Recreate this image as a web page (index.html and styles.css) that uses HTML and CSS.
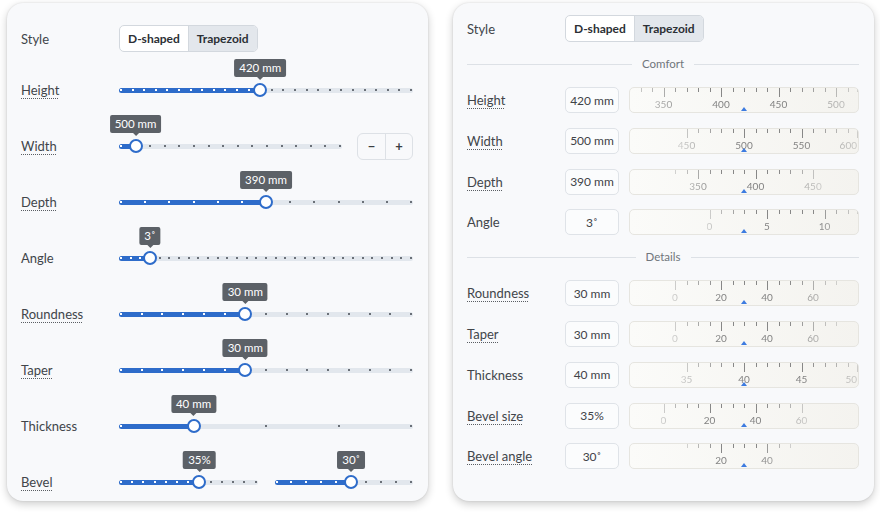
FILE: index.html
```html
<!DOCTYPE html>
<html lang="en">
<head>
    <meta charset="UTF-8">
    <meta name="viewport" content="width=device-width, initial-scale=1.0">
    <title>Handle settings</title>
    <link rel="stylesheet" href="styles.css">
</head>
<body>

    <!-- Slider panel -->
    <div class="panel panel-sliders">
        <div class="row row-style">
            <div class="label">Style</div>
            <div class="segmented">
                <button class="seg">D-shaped</button>
                <button class="seg active">Trapezoid</button>
            </div>
        </div>

        <div class="slider-list">
            <div class="row">
                <div class="label"><span class="hint">Height</span></div>
                <div class="slider" data-steps="25" data-at="12" data-tip="420 mm"></div>
            </div>
            <div class="row">
                <div class="label"><span class="hint">Width</span></div>
                <div class="slider" data-steps="15" data-at="1" data-tip="500 mm"></div>
                <div class="stepper">
                    <button>&minus;</button>
                    <button>+</button>
                </div>
            </div>
            <div class="row">
                <div class="label"><span class="hint">Depth</span></div>
                <div class="slider" data-steps="12" data-at="6" data-tip="390 mm"></div>
            </div>
            <div class="row">
                <div class="label">Angle</div>
                <div class="slider" data-steps="30" data-at="3" data-tip="3&#730;"></div>
            </div>
            <div class="row">
                <div class="label"><span class="hint">Roundness</span></div>
                <div class="slider" data-steps="14" data-at="6" data-tip="30 mm"></div>
            </div>
            <div class="row">
                <div class="label"><span class="hint">Taper</span></div>
                <div class="slider" data-steps="14" data-at="6" data-tip="30 mm"></div>
            </div>
            <div class="row">
                <div class="label">Thickness</div>
                <div class="slider" data-steps="4" data-at="1" data-tip="40 mm"></div>
            </div>
            <div class="row">
                <div class="label"><span class="hint">Bevel</span></div>
                <div class="slider-pair">
                    <div class="slider" data-steps="12" data-at="7" data-tip="35%"></div>
                    <div class="slider" data-steps="9" data-at="5" data-tip="30&#730;"></div>
                </div>
            </div>
        </div>
    </div>

    <!-- Ruler panel -->
    <div class="panel panel-rulers">
        <div class="row row-style">
            <div class="label">Style</div>
            <div class="segmented">
                <button class="seg">D-shaped</button>
                <button class="seg active">Trapezoid</button>
            </div>
        </div>

        <div class="divider">Comfort</div>
        <div class="field-list">
            <div class="field">
                <div class="label"><span class="hint">Height</span></div>
                <div class="value">420 mm</div>
                <div class="ruler" data-value="420" data-min="300" data-max="600" data-step="10" data-major="50"></div>
            </div>
            <div class="field">
                <div class="label"><span class="hint">Width</span></div>
                <div class="value">500 mm</div>
                <div class="ruler" data-value="500" data-min="450" data-max="700" data-step="10" data-major="50"></div>
            </div>
            <div class="field">
                <div class="label"><span class="hint">Depth</span></div>
                <div class="value">390 mm</div>
                <div class="ruler" data-value="390" data-min="330" data-max="450" data-step="10" data-major="50"></div>
            </div>
            <div class="field">
                <div class="label">Angle</div>
                <div class="value">3&#730;</div>
                <div class="ruler" data-value="3" data-min="0" data-max="15" data-step="1" data-major="5"></div>
            </div>
        </div>

        <div class="divider">Details</div>
        <div class="field-list">
            <div class="field">
                <div class="label"><span class="hint">Roundness</span></div>
                <div class="value">30 mm</div>
                <div class="ruler" data-value="30" data-min="0" data-max="70" data-step="5" data-major="20"></div>
            </div>
            <div class="field">
                <div class="label"><span class="hint">Taper</span></div>
                <div class="value">30 mm</div>
                <div class="ruler" data-value="30" data-min="0" data-max="70" data-step="5" data-major="20"></div>
            </div>
            <div class="field">
                <div class="label">Thickness</div>
                <div class="value">40 mm</div>
                <div class="ruler" data-value="40" data-min="35" data-max="55" data-step="1" data-major="5"></div>
            </div>
            <div class="field">
                <div class="label"><span class="hint">Bevel size</span></div>
                <div class="value">35%</div>
                <div class="ruler" data-value="35" data-min="0" data-max="60" data-step="5" data-major="20"></div>
            </div>
            <div class="field">
                <div class="label"><span class="hint">Bevel angle</span></div>
                <div class="value">30&#730;</div>
                <div class="ruler" data-value="30" data-min="5" data-max="50" data-step="5" data-major="20"></div>
            </div>
        </div>
    </div>

    <script>
        // stepped sliders: track, fill, step dots, thumb and value tip
        function buildSlider(el) {
            var steps = +el.dataset.steps;
            var at = +el.dataset.at;
            var pos = function (i) { return 'calc(2px + (100% - 4px) * ' + (i / steps) + ')'; };
            var html = '<div class="fill" style="width: ' + pos(at) + '"></div>';
            for (var i = 0; i <= steps; i++) {
                html += '<span class="dot' + (i < at ? ' on' : '') + '" style="left: ' + pos(i) + '"></span>';
            }
            html += '<span class="thumb" style="left: ' + pos(at) + '"></span>';
            html += '<span class="tip" style="left: ' + pos(at) + '">' + el.dataset.tip + '</span>';
            el.innerHTML = html;
        }

        function buildRuler(el) {
            var w = el.clientWidth;
            var h = el.clientHeight;
            var value = +el.dataset.value;
            var min = +el.dataset.min;
            var max = +el.dataset.max;
            var step = +el.dataset.step;
            var major = +el.dataset.major;
            var gap = 11.5;
            var mid = w / 2;
            var ticks = '';
            var labels = '';

            for (var i = 0; min + i * step <= max; i++) {
                var v = min + i * step;
                var x = mid + (v - value) * gap / step;
                if (x < -1 || x > w + 2) continue;
                var big = v % major === 0;
                var px = Math.min(Math.round(x), w - 1) + 0.5;
                ticks += '<line x1="' + px + '" y1="0" x2="' + px + '" y2="' + (big ? 9 : 4) + '"/>';
                if (big) {
                    if (x > w - 9) {
                        labels += '<text x="' + (w - 1) + '" y="20" text-anchor="end">' + v + '</text>';
                    } else {
                        labels += '<text x="' + x + '" y="20">' + v + '</text>';
                    }
                }
            }

            el.innerHTML =
                '<svg width="' + w + '" height="' + h + '" viewBox="0 0 ' + w + ' ' + h + '">' +
                '<g class="scale">' + '<g class="ticks">' + ticks + '</g>' +
                '<g class="nums">' + labels + '</g></g>' +
                '<polygon class="marker" points="' + (mid - 3) + ',' + (h - 1) + ' ' + (mid + 3) + ',' + (h - 1) + ' ' + mid + ',' + (h - 5) + '"/>' +
                '</svg>';
        }

        document.querySelectorAll('.slider').forEach(buildSlider);
        document.querySelectorAll('.ruler').forEach(buildRuler);
    </script>
</body>
</html>
```

FILE: styles.css
```css
/* General */
* {
    box-sizing: border-box;
}

body {
    margin: 0;
    padding: 3px 6px 0 7px;
    height: 512px;
    background: #fff;
    font-family: 'Lato', 'Liberation Sans', sans-serif;
    color: #3f4348;
    display: flex;
    gap: 25px;
}

button {
    font-family: inherit;
    cursor: pointer;
}

/* Panels */
.panel {
    width: 421px;
    height: 498px;
    flex-shrink: 0;
    background: #f8f9fb;
    border-radius: 16px;
    box-shadow: 0 3px 8px rgba(0, 0, 0, 0.2), 0 0 2px rgba(0, 0, 0, 0.12);
    padding: 22px 15px 0 14px;
}

.panel-rulers {
    padding-top: 12px;
}

.row {
    display: flex;
    align-items: center;
    height: 28px;
}

.row-style {
    height: 27px;
}

.label {
    width: 98px;
    flex-shrink: 0;
    font-size: 13px;
    color: #41454a;
}

.hint {
    text-decoration: underline dotted #5a5e63;
    text-decoration-thickness: 1px;
    text-underline-offset: 3px;
}

/* Segmented switch */
.segmented {
    display: flex;
    height: 27px;
    border: 1px solid #d3d8de;
    border-radius: 5px;
    overflow: hidden;
    background: #fff;
}

.seg {
    border: none;
    background: transparent;
    padding: 0 8px;
    font-size: 12px;
    font-weight: bold;
    color: #2c3035;
}

.seg.active {
    background: #e3e7ec;
    border-left: 1px solid #d3d8de;
}

/* Sliders */
.slider-list {
    margin-top: 24px;
    display: flex;
    flex-direction: column;
    gap: 28px;
}

.slider {
    position: relative;
    flex: 1;
    height: 5px;
    border-radius: 3px;
    background: #e2e7ed;
}

.slider .fill {
    position: absolute;
    left: 0;
    top: 0;
    bottom: 0;
    border-radius: 3px;
    background: #2e6cca;
}

.slider .dot {
    position: absolute;
    top: 1.5px;
    width: 2px;
    height: 2px;
    margin-left: -1px;
    background: #6a7078;
}

.slider .dot.on {
    background: #fff;
}

.slider .thumb {
    position: absolute;
    top: 50%;
    width: 14px;
    height: 14px;
    margin: -7px 0 0 -7px;
    border: 2px solid #2e6cca;
    border-radius: 50%;
    background: #fff;
}

.slider .tip {
    position: absolute;
    bottom: 16px;
    transform: translateX(-50%);
    padding: 0 5px;
    border-radius: 2px;
    background: #5c6167;
    color: #fff;
    font-size: 11.5px;
    line-height: 18px;
    white-space: nowrap;
}

.slider .tip::after {
    content: '';
    position: absolute;
    left: 50%;
    top: 100%;
    margin-left: -3px;
    border: 3px solid transparent;
    border-top-color: #5c6167;
    border-bottom: 0;
}

.slider-pair {
    flex: 1;
    display: flex;
    gap: 17px;
}

.stepper {
    display: flex;
    margin-left: 15px;
    height: 27px;
    border: 1px solid #dde1e6;
    border-radius: 6px;
    overflow: hidden;
}

.stepper button {
    width: 27px;
    border: none;
    background: transparent;
    font-size: 13px;
    font-weight: bold;
    color: #3a3e43;
}

.stepper button + button {
    border-left: 1px solid #dde1e6;
}

/* Ruler inputs */
.divider {
    display: flex;
    align-items: center;
    gap: 10px;
    margin: 14px 0 15px;
    font-size: 11.5px;
    line-height: 16px;
    color: #70767c;
}

.divider::before, .divider::after {
    content: '';
    flex: 1;
    height: 1px;
    background: #dde1e6;
}

.field-list {
    display: flex;
    flex-direction: column;
    gap: 14.75px;
}

.field {
    display: flex;
    align-items: center;
    height: 26px;
}

.value {
    width: 54px;
    height: 26px;
    margin-right: 10px;
    display: flex;
    align-items: center;
    justify-content: center;
    border: 1px solid #dfe3e8;
    border-radius: 5px;
    background: #fbfcfd;
    font-size: 12px;
    color: #3f4348;
}

.ruler {
    flex: 1;
    height: 26px;
    border: 1px solid #e6e5e0;
    border-radius: 5px;
    overflow: hidden;
    background: linear-gradient(to right, #fbfbf9, #f4f3ef);
}

.ruler svg {
    display: block;
}

.ruler .scale {
    -webkit-mask-image: linear-gradient(to right, rgba(0, 0, 0, 0.35), #000 30%, #000 70%, rgba(0, 0, 0, 0.35));
    mask-image: linear-gradient(to right, rgba(0, 0, 0, 0.35), #000 30%, #000 70%, rgba(0, 0, 0, 0.35));
}

.ruler line {
    stroke: #878787;
    stroke-width: 1;
}

.ruler text {
    font-family: 'Lato', sans-serif;
    font-size: 10px;
    fill: #828282;
    text-anchor: middle;
}

.ruler text[text-anchor="end"] {
    text-anchor: end;
}

.ruler .marker {
    fill: #3d7be0;
}
```
